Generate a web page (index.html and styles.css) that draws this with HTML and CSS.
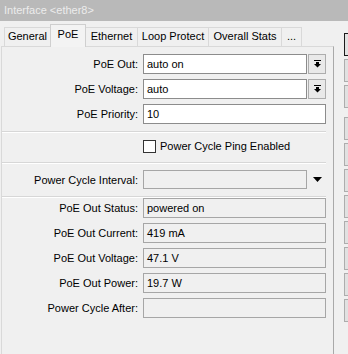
FILE: index.html
```html
<!DOCTYPE html>
<html lang="en">

<head>
  <meta charset="UTF-8">
  <title>Interface &lt;ether8&gt;</title>
  <link rel="stylesheet" href="styles.css">
</head>

<body>
  <div class="titlebar">Interface &lt;ether8&gt;</div>
  <div class="window">
    <div class="tabbox">
      <!--tabs-->
      <div class="tabs">
        <span class="tab">General</span>
        <span class="tab active">PoE</span>
        <span class="tab">Ethernet</span>
        <span class="tab">Loop Protect</span>
        <span class="tab">Overall Stats</span>
        <span class="tab">...</span>
      </div>
      <div class="panel">
        <div class="group">
          <div class="row">
            <label>PoE Out:</label>
            <div class="field edit short">auto on</div>
            <div class="drop">
              <svg width="7" height="8" viewBox="0 0 7 8"><rect x="0" y="0" width="7" height="1" fill="#000"/><rect x="2" y="2" width="3" height="2" fill="#000"/><polygon points="0,4 7,4 3.5,7.5" fill="#000"/></svg>
            </div>
          </div>
          <div class="row">
            <label>PoE Voltage:</label>
            <div class="field edit short">auto</div>
            <div class="drop">
              <svg width="7" height="8" viewBox="0 0 7 8"><rect x="0" y="0" width="7" height="1" fill="#000"/><rect x="2" y="2" width="3" height="2" fill="#000"/><polygon points="0,4 7,4 3.5,7.5" fill="#000"/></svg>
            </div>
          </div>
          <div class="row">
            <label>PoE Priority:</label>
            <div class="field edit">10</div>
          </div>
        </div>

        <div class="sep"></div>

        <div class="row check">
          <span class="checkbox"></span>
          <span>Power Cycle Ping Enabled</span>
        </div>

        <div class="sep"></div>

        <div class="row interval">
          <label>Power Cycle Interval:</label>
          <div class="field ro short"></div>
          <svg class="tri" width="9" height="5" viewBox="0 0 9 5"><polygon points="0,0 9,0 4.5,5" fill="#000"/></svg>
        </div>

        <div class="sep"></div>

        <div class="group status">
          <div class="row">
            <label>PoE Out Status:</label>
            <div class="field ro">powered on</div>
          </div>
          <div class="row">
            <label>PoE Out Current:</label>
            <div class="field ro">419 mA</div>
          </div>
          <div class="row">
            <label>PoE Out Voltage:</label>
            <div class="field ro">47.1 V</div>
          </div>
          <div class="row">
            <label>PoE Out Power:</label>
            <div class="field ro">19.7 W</div>
          </div>
          <div class="row">
            <label>Power Cycle After:</label>
            <div class="field ro"></div>
          </div>
        </div>
      </div>
    </div>

    <!--右侧按钮-->
    <div class="buttons">
      <div class="btn default"></div>
      <div class="btn"></div>
      <div class="btn"></div>
      <div class="btn gap"></div>
      <div class="btn"></div>
      <div class="btn"></div>
      <div class="btn"></div>
      <div class="btn"></div>
      <div class="btn"></div>
      <div class="btn"></div>
      <div class="btn"></div>
    </div>
  </div>
</body>

</html>
```

FILE: styles.css
```css
* {
  margin: 0;
  padding: 0;
  box-sizing: border-box;
}

body {
  width: 348px;
  height: 354px;
  overflow: hidden;
  background-color: #f0f0f0;
  font-family: "Liberation Sans", Arial, sans-serif;
  font-size: 11px;
  color: #000;
}

.titlebar {
  height: 21px;
  line-height: 21px;
  padding-left: 4px;
  background-color: #b9b9b9;
  color: #ececec;
  font-size: 11px;
}

.window {
  display: flex;
  height: 333px;
  overflow: hidden;
}

.tabbox {
  width: 333px;
  margin-left: 1px;
  display: flex;
  flex-direction: column;
}

.tabs {
  display: flex;
  align-items: flex-end;
  height: 25px;
  padding-left: 3px;
}

.tab {
  height: 19px;
  line-height: 17px;
  text-align: center;
  border: 1px solid #d9d9d9;
  border-bottom: none;
  margin-right: -1px;
  background-color: #f0f0f0;
  white-space: nowrap;
}

/* tab widths */
.tab:nth-child(1) { width: 47px; }
.tab:nth-child(2) { width: 36px; }
.tab:nth-child(3) { width: 53px; }
.tab:nth-child(4) { width: 72px; }
.tab:nth-child(5) { width: 74px; }
.tab:nth-child(6) { width: 21px; }

.tab.active {
  height: 23px;
  line-height: 19px;
  margin-bottom: -1px;
  position: relative;
  z-index: 1;
  background-color: #f3f3f3;
  border-color: #cfcfcf;
}

.panel {
  flex: 1;
  border: 1px solid #d9d9d9;
  border-right-color: #a9a9a9;
  border-bottom: none;
  padding-top: 7px;
}

.group {
  display: flex;
  flex-direction: column;
  gap: 5px;
}

.row {
  display: flex;
  align-items: center;
  height: 20px;
}

.row label {
  width: 136px;
  margin-right: 5px;
  text-align: right;
  white-space: nowrap;
}

.field {
  width: 183px;
  height: 20px;
  line-height: 18px;
  padding-left: 3px;
  border: 1px solid #a0a0a0;
  white-space: nowrap;
}

.field.short {
  width: 164px;
}

.field.edit {
  background-color: #fff;
  border-color: #8c8c8c;
}

.field.ro {
  background-color: #f0f0f0;
  border-color: #a6a6a6;
}

.drop {
  width: 18px;
  height: 20px;
  margin-left: 1px;
  border: 1px solid #adadad;
  background-color: #e9e9e9;
  display: flex;
  align-items: center;
  justify-content: center;
}

.sep {
  height: 2px;
  margin: 7px 7px 0 0;
  border-top: 1px solid #d7d7d7;
  border-bottom: 1px solid #fff;
}

.check {
  margin-top: 3px;
  padding-left: 141px;
}

.checkbox {
  width: 13px;
  height: 13px;
  margin-right: 4px;
  border: 1px solid #333;
  background-color: #fff;
}

.check + .sep {
  margin-top: 6px;
}

.interval {
  height: 19px;
  margin-top: 6px;
}

.interval .field {
  height: 19px;
  line-height: 17px;
}

.tri {
  margin-left: 6px;
}

.buttons {
  margin-left: 10px;
  padding-top: 12px;
  display: flex;
  flex-direction: column;
  gap: 3px;
}

.btn {
  width: 4px;
  height: 23px;
  border: 1px solid #adadad;
  border-right: none;
  background-color: #e1e1e1;
}

.btn.default {
  border-color: #1a1a1a;
}

.btn.gap {
  margin-top: 6px;
}
```
